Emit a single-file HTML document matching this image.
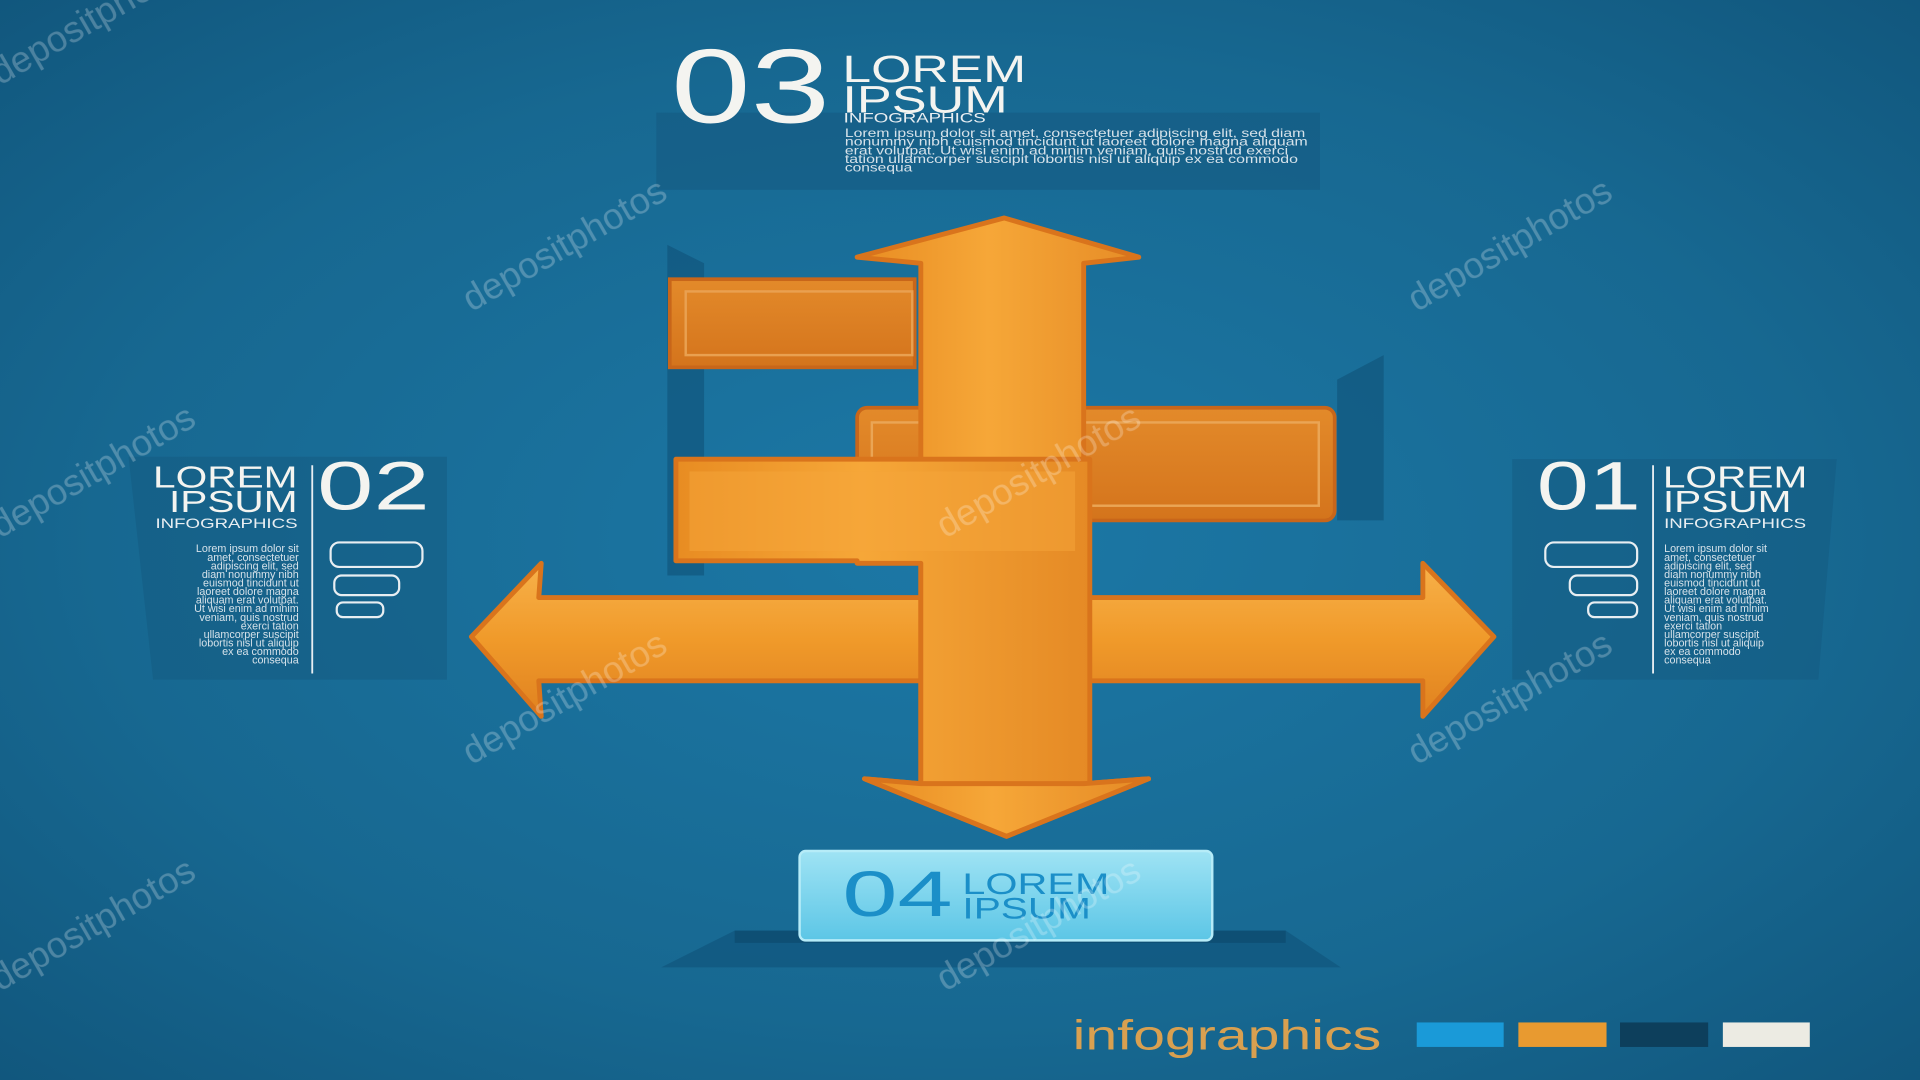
<!DOCTYPE html>
<html><head><meta charset="utf-8"><style>
html,body{margin:0;padding:0;width:1920px;height:1080px;overflow:hidden;background:#155f88}
svg{display:block}
text{font-family:"Liberation Sans",sans-serif}
</style></head><body>
<svg width="1920" height="1080" viewBox="0 0 1568 882" preserveAspectRatio="none" xmlns="http://www.w3.org/2000/svg">
<defs>
<radialGradient id="bg" cx="0.5" cy="0.5" r="0.75">
<stop offset="0" stop-color="#1c78a6"/><stop offset="0.6" stop-color="#176891"/><stop offset="1" stop-color="#10547a"/>
</radialGradient>
<linearGradient id="orH" x1="0" y1="0" x2="0" y2="1">
<stop offset="0" stop-color="#f7b14a"/><stop offset="0.5" stop-color="#f09a2a"/><stop offset="1" stop-color="#e08220"/>
</linearGradient>
<linearGradient id="orV" x1="0" y1="0" x2="1" y2="0">
<stop offset="0" stop-color="#e88c22"/><stop offset="0.45" stop-color="#f6a738"/><stop offset="1" stop-color="#e58a25"/>
</linearGradient>
<linearGradient id="bar" x1="0" y1="0" x2="0" y2="1">
<stop offset="0" stop-color="#e38a2a"/><stop offset="1" stop-color="#d4741c"/>
</linearGradient>
<linearGradient id="cyan" x1="0" y1="0" x2="0" y2="1">
<stop offset="0" stop-color="#9fe3f4"/><stop offset="1" stop-color="#5cc6e6"/>
</linearGradient>
</defs>
<rect width="1568" height="882" fill="url(#bg)"/>

<polygon points="545,200 575,215 575,470 545,470" fill="#0f5278" opacity="0.6"/>
<polygon points="1092,310 1130,290 1130,425 1092,425" fill="#0f5278" opacity="0.6"/>
<polygon points="540,790 600,760 1050,760 1095,790" fill="#11587f" opacity="0.8"/>
<rect x="600" y="760" width="450" height="10" fill="#0e4f74"/>

<rect x="536" y="92" width="542" height="63" fill="#155d84" opacity="0.7"/>
<text x="548" y="100" font-size="86" fill="#f4f4f0" textLength="130" lengthAdjust="spacingAndGlyphs">03</text>
<text x="688" y="67" font-size="31" fill="#f4f4f0" textLength="150" lengthAdjust="spacingAndGlyphs">LOREM</text>
<text x="688" y="92" font-size="31" fill="#f4f4f0" textLength="135" lengthAdjust="spacingAndGlyphs">IPSUM</text>
<text x="689" y="100" font-size="11" fill="#e8eef2" textLength="116" lengthAdjust="spacingAndGlyphs">INFOGRAPHICS</text>
<g font-size="9.5" fill="#d6e2ea">
<text x="690" y="112" textLength="376" lengthAdjust="spacingAndGlyphs">Lorem ipsum dolor sit amet, consectetuer adipiscing elit, sed diam</text>
<text x="690" y="119" textLength="378" lengthAdjust="spacingAndGlyphs">nonummy nibh euismod tincidunt ut laoreet dolore magna aliquam</text>
<text x="690" y="126" textLength="362" lengthAdjust="spacingAndGlyphs">erat volutpat. Ut wisi enim ad minim veniam, quis nostrud exerci</text>
<text x="690" y="133" textLength="370" lengthAdjust="spacingAndGlyphs">tation ullamcorper suscipit lobortis nisl ut aliquip ex ea commodo</text>
<text x="690" y="140" textLength="55" lengthAdjust="spacingAndGlyphs">consequa</text>
</g>

<polygon points="105,373 365,373 365,555 125,555" fill="#145a80" opacity="0.5"/>
<line x1="255" y1="380" x2="255" y2="550" stroke="#e8eef2" stroke-width="1.5"/>
<text x="243" y="398" font-size="25" fill="#f4f4f0" text-anchor="end" textLength="118" lengthAdjust="spacingAndGlyphs">LOREM</text>
<text x="243" y="418" font-size="25" fill="#f4f4f0" text-anchor="end" textLength="105" lengthAdjust="spacingAndGlyphs">IPSUM</text>
<text x="243" y="431" font-size="11" fill="#e8eef2" text-anchor="end" textLength="116" lengthAdjust="spacingAndGlyphs">INFOGRAPHICS</text>
<text x="259" y="416" font-size="56" fill="#f4f4f0" textLength="92" lengthAdjust="spacingAndGlyphs">02</text>
<g font-size="8.8" fill="#d6e2ea" text-anchor="end">
<text x="244" y="451">Lorem ipsum dolor sit</text><text x="244" y="458">amet, consectetuer</text>
<text x="244" y="465">adipiscing elit, sed</text><text x="244" y="472">diam nonummy nibh</text>
<text x="244" y="479">euismod tincidunt ut</text><text x="244" y="486">laoreet dolore magna</text>
<text x="244" y="493">aliquam erat volutpat.</text><text x="244" y="500">Ut wisi enim ad minim</text>
<text x="244" y="507">veniam, quis nostrud</text><text x="244" y="514">exerci tation</text>
<text x="244" y="521">ullamcorper suscipit</text><text x="244" y="528">lobortis nisl ut aliquip</text>
<text x="244" y="535">ex ea commodo</text><text x="244" y="542">consequa</text>
</g>
<g fill="none" stroke="#e8eef2" stroke-width="1.8">
<rect x="270" y="443" width="75" height="20" rx="7"/>
<rect x="273" y="470" width="53" height="16" rx="6"/>
<rect x="275" y="492" width="38" height="12" rx="5"/>
</g>

<polygon points="1235,375 1500,375 1485,555 1235,555" fill="#145a80" opacity="0.5"/>
<line x1="1350" y1="380" x2="1350" y2="550" stroke="#e8eef2" stroke-width="1.5"/>
<text x="1255" y="416" font-size="56" fill="#f4f4f0" textLength="85" lengthAdjust="spacingAndGlyphs">01</text>
<text x="1358" y="398" font-size="25" fill="#f4f4f0" textLength="118" lengthAdjust="spacingAndGlyphs">LOREM</text>
<text x="1358" y="418" font-size="25" fill="#f4f4f0" textLength="105" lengthAdjust="spacingAndGlyphs">IPSUM</text>
<text x="1359" y="431" font-size="11" fill="#e8eef2" textLength="116" lengthAdjust="spacingAndGlyphs">INFOGRAPHICS</text>
<g font-size="8.8" fill="#d6e2ea">
<text x="1359" y="451">Lorem ipsum dolor sit</text><text x="1359" y="458">amet, consectetuer</text>
<text x="1359" y="465">adipiscing elit, sed</text><text x="1359" y="472">diam nonummy nibh</text>
<text x="1359" y="479">euismod tincidunt ut</text><text x="1359" y="486">laoreet dolore magna</text>
<text x="1359" y="493">aliquam erat volutpat.</text><text x="1359" y="500">Ut wisi enim ad minim</text>
<text x="1359" y="507">veniam, quis nostrud</text><text x="1359" y="514">exerci tation</text>
<text x="1359" y="521">ullamcorper suscipit</text><text x="1359" y="528">lobortis nisl ut aliquip</text>
<text x="1359" y="535">ex ea commodo</text><text x="1359" y="542">consequa</text>
</g>
<g fill="none" stroke="#e8eef2" stroke-width="1.8">
<rect x="1262" y="443" width="75" height="20" rx="7"/>
<rect x="1282" y="470" width="55" height="16" rx="6"/>
<rect x="1297" y="492" width="40" height="12" rx="5"/>
</g>

<rect x="547" y="228" width="200" height="72" fill="url(#bar)" stroke="#c8661a" stroke-width="3"/>
<rect x="560" y="238" width="185" height="52" fill="none" stroke="#e9a050" stroke-width="2"/>
<rect x="700" y="333" width="390" height="92" rx="8" fill="url(#bar)" stroke="#c8661a" stroke-width="3"/>
<rect x="712" y="345" width="365" height="68" fill="none" stroke="#eaa555" stroke-width="2"/>
<path d="M385,520 L442,460 L440,488 L1162,488 L1162,460 L1220,520 L1162,585 L1162,556 L440,556 L442,585 Z" fill="url(#orH)" stroke="#d9741c" stroke-width="4" stroke-linejoin="round"/>
<path d="M820,178 L930,210 L885,215 L885,640 L938,636 L822,683 L706,636 L752,640 L752,215 L700,210 Z" fill="url(#orV)" stroke="#d9741c" stroke-width="4" stroke-linejoin="round"/>
<path d="M552,375 L890,375 L890,640 L752,640 L752,460 L700,460 L700,458 L552,458 Z" fill="url(#orV)" stroke="#d9741c" stroke-width="4" stroke-linejoin="round"/>
<rect x="563" y="385" width="315" height="65" fill="#f5a63a" opacity="0.5"/>
<path d="M885,640 L938,636 L822,683 L706,636 L752,640 Z" fill="url(#orV)" stroke="#d9741c" stroke-width="4" stroke-linejoin="round"/>

<rect x="653" y="695" width="337" height="73" rx="5" fill="url(#cyan)" stroke="#b6ecf8" stroke-width="2"/>
<text x="688" y="748" font-size="52" fill="#1b8fc8" textLength="90" lengthAdjust="spacingAndGlyphs">04</text>
<text x="786" y="730" font-size="24" fill="#1b8fc8" textLength="120" lengthAdjust="spacingAndGlyphs">LOREM</text>
<text x="786" y="750" font-size="24" fill="#1b8fc8" textLength="105" lengthAdjust="spacingAndGlyphs">IPSUM</text>

<g font-size="30" fill="#ffffff" opacity="0.25">
<text transform="translate(385,255) rotate(-30)">depositphotos</text>
<text transform="translate(1157,255) rotate(-30)">depositphotos</text>
<text transform="translate(0,440) rotate(-30)">depositphotos</text>
<text transform="translate(772,440) rotate(-30)">depositphotos</text>
<text transform="translate(385,625) rotate(-30)">depositphotos</text>
<text transform="translate(1157,625) rotate(-30)">depositphotos</text>
<text transform="translate(0,810) rotate(-30)">depositphotos</text>
<text transform="translate(772,810) rotate(-30)">depositphotos</text>
<text transform="translate(0,70) rotate(-30)">depositphotos</text>
</g>

<text x="876" y="857" font-size="34" fill="#d9a050" textLength="252" lengthAdjust="spacingAndGlyphs">infographics</text>
<rect x="1157" y="835" width="71" height="20" fill="#1a9ad8"/>
<rect x="1240" y="835" width="72" height="20" fill="#e89a30"/>
<rect x="1323" y="835" width="72" height="20" fill="#0d3f5c"/>
<rect x="1407" y="835" width="71" height="20" fill="#ecebe3"/>
</svg>
</body></html>
